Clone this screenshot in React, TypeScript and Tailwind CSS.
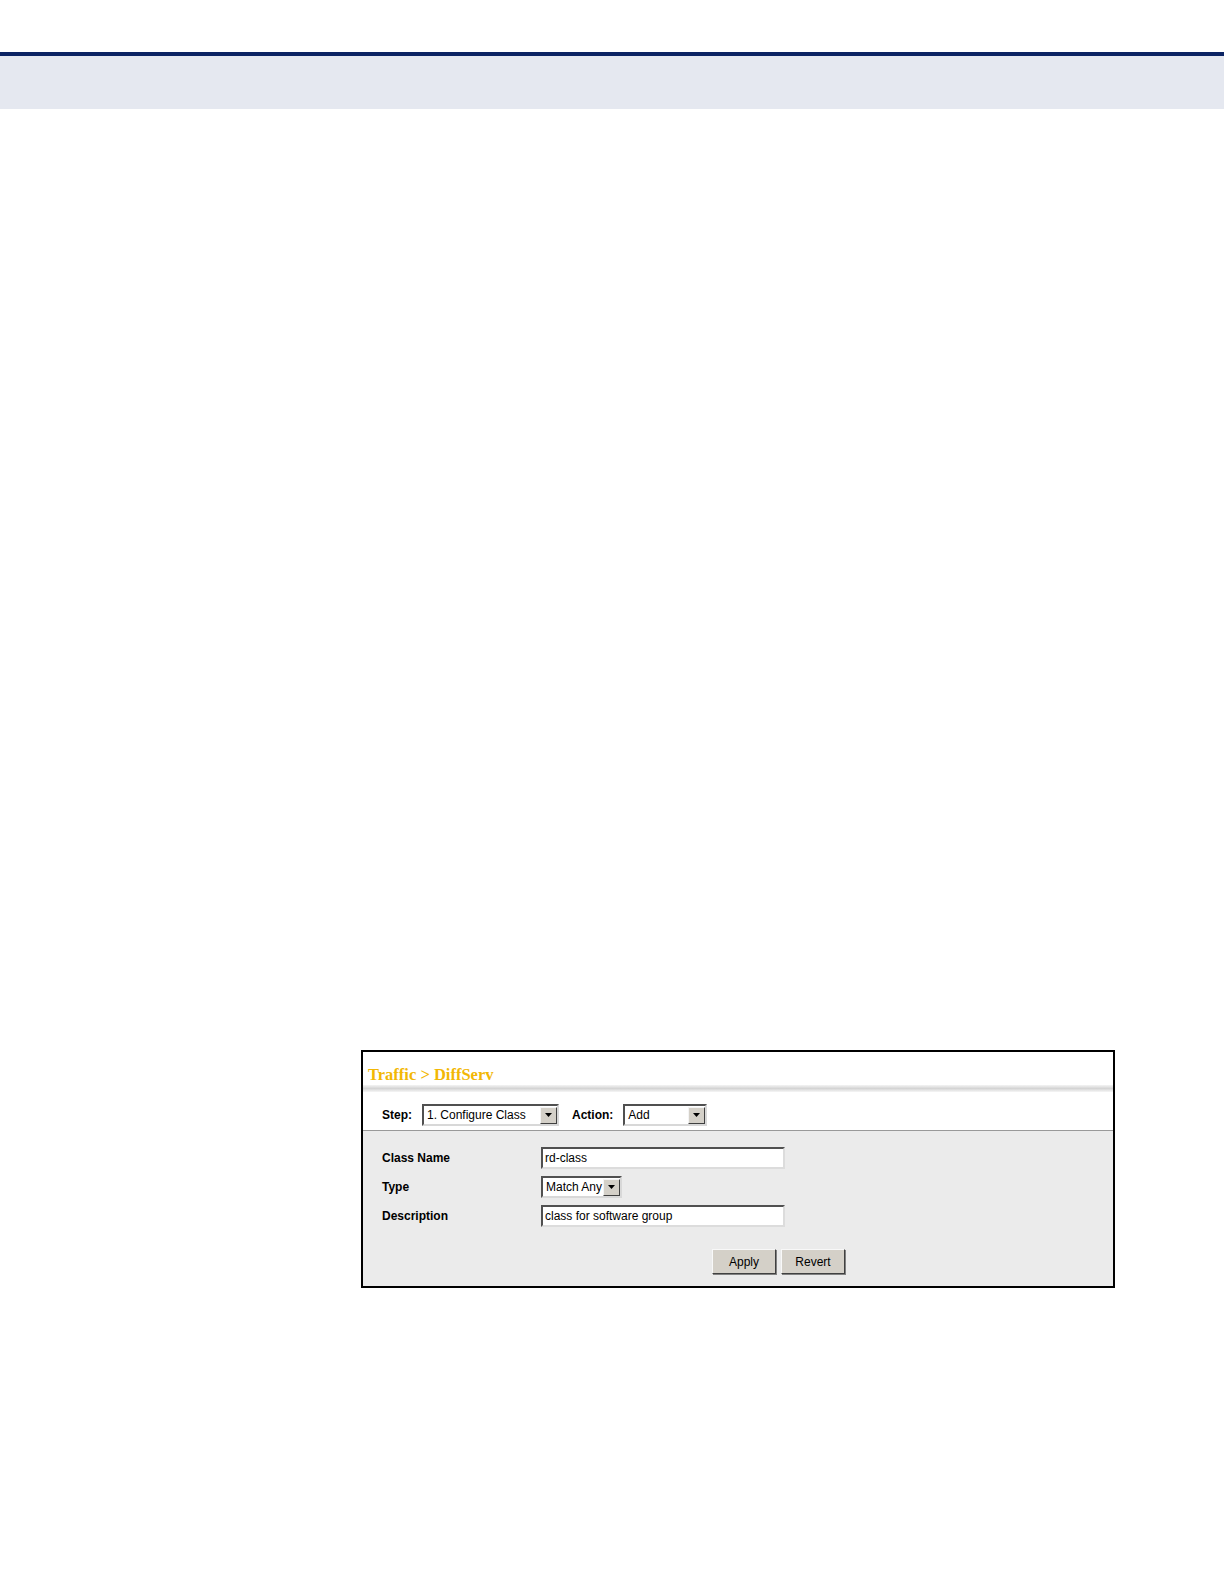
function ArrowBtn() {
  return (
    <span className="flex h-[17px] w-[17px] items-center justify-center border border-t-[#f4f4f4] border-l-[#f4f4f4] border-r-[#404040] border-b-[#404040] bg-[#d4d0c8]">
      <svg width="7" height="4" viewBox="0 0 7 4">
        <path d="M0 0H7L3.5 4Z" fill="#000" />
      </svg>
    </span>
  );
}

function Select({ value, width }: { value: string; width: string }) {
  return (
    <div
      className={`flex h-[22px] items-center justify-between border-2 border-t-[#505050] border-l-[#505050] border-r-[#d8d8d8] border-b-[#d8d8d8] bg-white pl-[3px] ${width}`}
    >
      <span className="text-[12px] leading-none text-black">{value}</span>
      <ArrowBtn />
    </div>
  );
}

function TextInput({ value }: { value: string }) {
  return (
    <div className="flex h-[22px] w-[244px] items-center border-2 border-t-[#505050] border-l-[#505050] border-r-[#dcdcdc] border-b-[#dcdcdc] bg-white pl-[2px]">
      <span className="text-[12px] leading-none text-black">{value}</span>
    </div>
  );
}

function Button({ label }: { label: string }) {
  return (
    <div className="flex h-[25px] w-[64px] items-center justify-center border border-t-[#f8f8f8] border-l-[#f8f8f8] border-r-[#404040] border-b-[#404040] bg-[#d4d0c8] shadow-[1px_1px_0_#808080]">
      <span className="text-[12px] text-black">{label}</span>
    </div>
  );
}

function FormRow({ label, children }: { label: string; children: React.ReactNode }) {
  return (
    <div className="flex h-[29px] items-start">
      <span className="flex h-[22px] w-[159px] items-center text-[12px] font-bold text-black">{label}</span>
      {children}
    </div>
  );
}

export default function App() {
  return (
    <div className="min-h-[1584px] w-[1224px] bg-white" style={{ fontFamily: '"Liberation Sans", Arial, sans-serif' }}>
      {/* page header band */}
      <div className="h-[52px]" />
      <div className="h-[4px] bg-[#0b2363]" />
      <div className="h-[53px] bg-[#e5e8f0]" />

      {/* screenshot panel */}
      <div className="ml-[361px] mt-[941px] flex h-[238px] w-[754px] flex-col border-2 border-black bg-white">
        <div className="flex h-[33px] items-end pb-[2px] pl-[5px]">
          <span
            className="text-[16.5px] font-bold leading-none text-[#f2b705]"
            style={{ fontFamily: '"Liberation Serif", "Times New Roman", serif' }}
          >
            Traffic &gt; DiffServ
          </span>
        </div>
        <div className="h-[7px] bg-gradient-to-b from-[#f4f4f4] via-[#d4d4d4] to-[#f6f6f6]" />
        <div className="flex h-[39px] items-start border-b border-[#999] pl-[19px] pt-[12px]">
          <span className="flex h-[22px] items-center text-[12px] font-bold text-black">Step:</span>
          <Select value="1. Configure Class" width="ml-[10px] w-[137px]" />
          <span className="ml-[13px] flex h-[22px] items-center text-[12px] font-bold text-black">Action:</span>
          <Select value="Add" width="ml-[10px] w-[84px]" />
        </div>
        <div className="flex flex-1 flex-col bg-[#ebebeb] pl-[19px] pt-[16px]">
          <FormRow label="Class Name">
            <TextInput value="rd-class" />
          </FormRow>
          <FormRow label="Type">
            <Select value="Match Any" width="w-[81px]" />
          </FormRow>
          <FormRow label="Description">
            <TextInput value="class for software group" />
          </FormRow>
          <div className="ml-[330px] mt-[15px] flex gap-[5px]">
            <Button label="Apply" />
            <Button label="Revert" />
          </div>
        </div>
      </div>
    </div>
  );
}
